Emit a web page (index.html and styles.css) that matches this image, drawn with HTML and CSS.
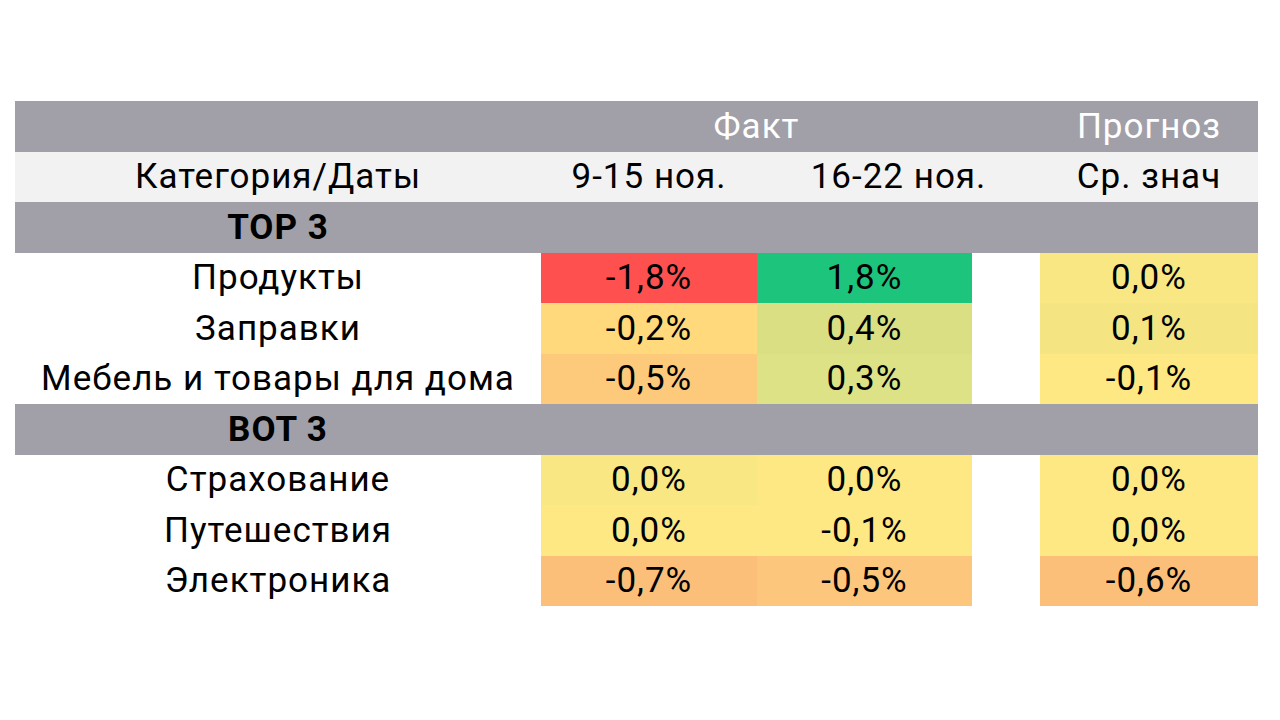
FILE: index.html
```html
<!DOCTYPE html>
<html lang="ru">
<head>
<meta charset="utf-8">
<link rel="stylesheet" href="styles.css">
</head>
<body>
<table class="grid">
  <colgroup>
    <col class="c-cat"><col class="c-val"><col class="c-val2"><col class="c-gap"><col class="c-val3">
  </colgroup>
  <tr class="r-top">
    <td></td><td colspan="2">Факт</td><td></td><td>Прогноз</td>
  </tr>
  <tr class="r-head">
    <td>Категория/Даты</td><td>9-15 ноя.</td><td colspan="2">16-22 ноя.</td><td>Ср. знач</td>
  </tr>
  <tr class="r-group">
    <td>TOP 3</td><td></td><td></td><td></td><td></td>
  </tr>
  <tr>
    <td>Продукты</td><td class="red">-1,8%</td><td class="green">1,8%</td><td></td><td class="y1">0,0%</td>
  </tr>
  <tr>
    <td>Заправки</td><td class="yo">-0,2%</td><td class="ol">0,4%</td><td></td><td class="y2">0,1%</td>
  </tr>
  <tr>
    <td>Мебель и товары для дома</td><td class="o1">-0,5%</td><td class="ol2">0,3%</td><td></td><td class="y3">-0,1%</td>
  </tr>
  <tr class="r-group">
    <td>BOT 3</td><td></td><td></td><td></td><td></td>
  </tr>
  <tr>
    <td>Страхование</td><td class="y1">0,0%</td><td class="y3">0,0%</td><td></td><td class="y3">0,0%</td>
  </tr>
  <tr>
    <td>Путешествия</td><td class="y3">0,0%</td><td class="y3">-0,1%</td><td></td><td class="y3">0,0%</td>
  </tr>
  <tr>
    <td>Электроника</td><td class="o2">-0,7%</td><td class="o3">-0,5%</td><td></td><td class="o2">-0,6%</td>
  </tr>
</table>
</body>
</html>
```
FILE: styles.css
```css
html, body {
  margin: 0;
  padding: 0;
  background: #ffffff;
}
body {
  padding-top: 101px;
  padding-left: 15px;
  font-family: Roboto, "Noto Sans", sans-serif;
  color: #000;
}
.grid {
  border-collapse: collapse;
  table-layout: fixed;
  width: 1243px;
  font-size: 35px;
  letter-spacing: 1px;
}
.c-cat { width: 526px; }
.c-val { width: 216px; }
.c-val2 { width: 215px; }
.c-gap { width: 68px; }
.c-val3 { width: 218px; }
.grid td {
  height: 50.5px;
  padding: 0;
  text-align: center;
  vertical-align: middle;
  line-height: 1;
  white-space: nowrap;
}
.r-top td {
  background: #a1a0a8;
  color: #ffffff;
}
.r-head td {
  background: #f2f2f2;
}
.r-group td {
  background: #a1a0a8;
  font-weight: 700;
}
.red { background: #ff5050; }
.green { background: #1cc47c; }
.y1 { background: #f8e782; }
.y2 { background: #f4e482; }
.y3 { background: #fde883; }
.yo { background: #ffd97c; }
.ol { background: #dbdf84; }
.ol2 { background: #dde286; }
.o1 { background: #fdc97a; }
.o2 { background: #fbbf7a; }
.o3 { background: #fdc67d; }
```
